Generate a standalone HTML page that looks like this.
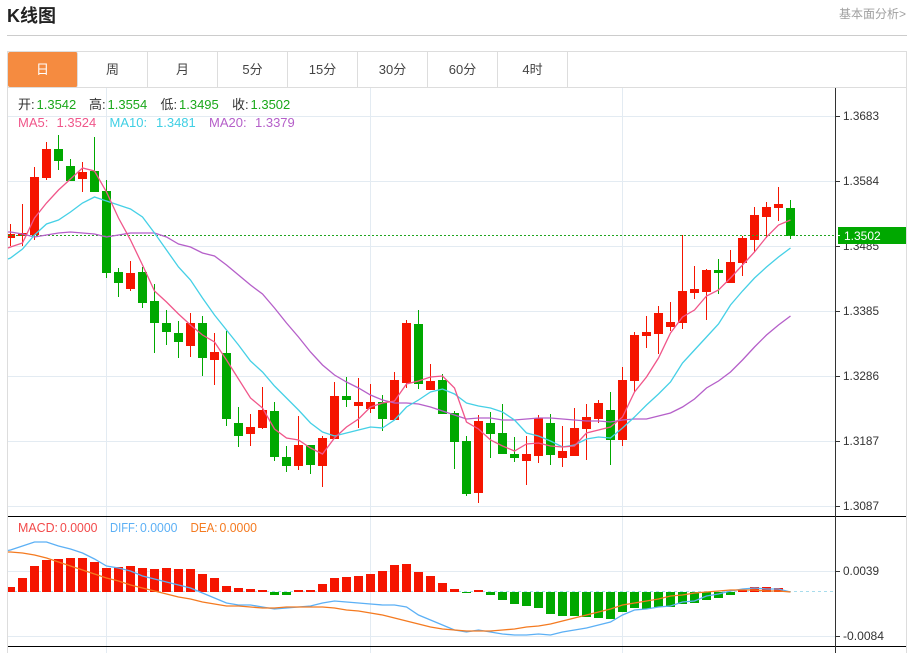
<!DOCTYPE html>
<html lang="zh">
<head>
<meta charset="utf-8">
<title>K线图</title>
<style>
html,body{margin:0;padding:0;background:#fff;width:917px;height:653px;overflow:hidden}
body{position:relative;font-family:"Liberation Sans","Noto Sans CJK SC",sans-serif}
svg{position:absolute;left:0;top:0}
svg text{font-family:"Liberation Sans","Noto Sans CJK SC",sans-serif}
.title{position:absolute;left:7px;top:3px;font-size:18px;line-height:26px;font-weight:bold;color:#222}
.link{position:absolute;right:11px;top:6px;font-size:12px;line-height:16px;color:#a0a0a0}
.tabs{position:absolute;left:8px;top:52px;height:35px;display:flex}
.tab{box-sizing:border-box;width:70px;height:35px;line-height:35px;text-align:center;font-size:13px;color:#444;border-right:1px solid #ddd}
.tab.on{background:#f58b40;color:#fff;border-radius:2px}
</style>
</head>
<body>
<svg width="917" height="653" viewBox="0 0 917 653" xmlns="http://www.w3.org/2000/svg">
<path d="M7 35.5H907" stroke="#ccc" fill="none"/>
<path d="M7.5 653V51.5H906.5V653M8 87.5H906" stroke="#ddd" fill="none"/>
<path d="M8 116.5H835M8 181.5H835M8 246.5H835M8 311.5H835M8 376.5H835M8 441.5H835M8 506.5H835M8 571.5H835M8 636.5H835M106.5 88V653M370.5 88V653M622.5 88V653" stroke="#e3ebf2" fill="none"/>

<path fill="#f51500" d="M8 234h7v4h-7zM18 233h9v3h-9zM30 177h9v58h-9zM42 149h9v29h-9zM78 172h9v7h-9zM126 273h9v16h-9zM186 323h9v23h-9zM210 352h9v8h-9zM246 427h9v7h-9zM258 410h9v18h-9zM294 445h9v21h-9zM318 438h9v28h-9zM330 396h9v43h-9zM354 402h9v4h-9zM366 402h9v7h-9zM390 380h9v40h-9zM402 323h9v60h-9zM426 381h9v9h-9zM474 421h9v72h-9zM522 454h9v7h-9zM534 418h9v38h-9zM558 451h9v7h-9zM570 428h9v28h-9zM582 417h9v12h-9zM594 403h9v16h-9zM618 380h9v60h-9zM630 335h9v46h-9zM642 332h9v4h-9zM654 313h9v21h-9zM666 322h9v5h-9zM678 291h9v32h-9zM690 289h9v4h-9zM702 270h9v22h-9zM726 262h9v21h-9zM738 238h9v25h-9zM750 215h9v25h-9zM762 207h9v10h-9zM774 204h9v4h-9z"/>
<path fill="none" stroke="#f51500" d="M10.5 224V246M22.5 204V246M34.5 167V240M46.5 142V180M82.5 162V192M130.5 261V291M190.5 313V357M214.5 333V385M250.5 414V446M262.5 387V429M298.5 416V470M322.5 436V487M334.5 382V439M358.5 378V428M370.5 384V413M394.5 372V420M406.5 320V388M430.5 364V390M478.5 415V503M526.5 436V485M538.5 415V463M562.5 426V467M574.5 408V456M586.5 404V460M598.5 400V423M622.5 367V446M634.5 332V392M646.5 316V348M658.5 306V354M670.5 302V331M682.5 235V329M694.5 266V299M706.5 269V320M730.5 250V283M742.5 236V276M754.5 207V252M766.5 202V238M778.5 187V221"/>
<path fill="#00a800" d="M54 149h9v12h-9zM66 166h9v15h-9zM90 171h9v21h-9zM102 191h9v82h-9zM114 272h9v11h-9zM138 272h9v31h-9zM150 301h9v22h-9zM162 323h9v9h-9zM174 333h9v9h-9zM198 323h9v35h-9zM222 353h9v66h-9zM234 423h9v13h-9zM270 411h9v46h-9zM282 457h9v9h-9zM306 445h9v20h-9zM342 396h9v4h-9zM378 402h9v17h-9zM414 324h9v60h-9zM438 380h9v34h-9zM450 413h9v29h-9zM462 441h9v53h-9zM486 423h9v11h-9zM498 433h9v21h-9zM510 454h9v4h-9zM546 423h9v32h-9zM606 410h9v30h-9zM714 270h9v3h-9zM786 208h9v28h-9z"/>
<path fill="none" stroke="#00a800" d="M58.5 135V170M70.5 159V181M94.5 137V192M106.5 180V278M118.5 268V297M142.5 267V308M154.5 284V353M166.5 310V345M178.5 321V358M202.5 316V376M226.5 331V426M238.5 407V447M274.5 402V461M286.5 446V472M310.5 445V474M346.5 377V407M382.5 395V431M418.5 310V389M442.5 374V414M454.5 411V469M466.5 436V496M490.5 412V458M502.5 404V454M514.5 437V462M550.5 414V465M610.5 392V465M718.5 259V294M790.5 200V239"/>

<path d="M8 235.5H835" stroke="#1fa51f" stroke-dasharray="2 2" fill="none"/>

<polyline fill="none" stroke="#b55fc9" stroke-width="1.3" points="8,232 10.5,232 22.5,234 34.5,237 46.5,235 58.5,233 70.5,232 82.5,233 94.5,234 106.5,237 118.5,235 130.5,233 142.5,233 154.5,233 166.5,237 178.5,244 190.5,247 202.5,253 214.5,256 226.5,265 238.5,275 250.5,285 262.5,294 274.5,308 286.5,323 298.5,337 310.5,352 322.5,365 334.5,375 346.5,382 358.5,388 370.5,395 382.5,400 394.5,403 406.5,403 418.5,404 430.5,407 442.5,411 454.5,415 466.5,419 478.5,418 490.5,418 502.5,420 514.5,420 526.5,419 538.5,418 550.5,418 562.5,419 574.5,420 586.5,421 598.5,421 610.5,422 622.5,420 634.5,419 646.5,419 658.5,416 670.5,413 682.5,407 694.5,399 706.5,388 718.5,381 730.5,372 742.5,360 754.5,347 766.5,335 778.5,325 790.5,316"/>
<polyline fill="none" stroke="#45d0e6" stroke-width="1.3" points="8,259 10.5,258 22.5,249 34.5,235 46.5,224 58.5,220 70.5,212 82.5,203 94.5,197 106.5,201 118.5,205 130.5,209 142.5,217 154.5,233 166.5,250 178.5,267 190.5,280 202.5,298 214.5,315 226.5,330 238.5,345 250.5,361 262.5,372 274.5,386 286.5,398 298.5,410 310.5,423 322.5,432 334.5,436 346.5,433 358.5,430 370.5,427 382.5,428 394.5,420 406.5,407 418.5,400 430.5,392 442.5,389 454.5,394 466.5,403 478.5,406 490.5,408 502.5,412 514.5,420 526.5,433 538.5,436 550.5,441 562.5,447 574.5,445 586.5,439 598.5,437 610.5,438 622.5,428 634.5,417 646.5,405 658.5,394 670.5,382 682.5,363 694.5,350 706.5,337 718.5,324 730.5,305 742.5,291 754.5,278 766.5,267 778.5,257 790.5,248"/>
<polyline fill="none" stroke="#f0568a" stroke-width="1.3" points="8,248 10.5,247 22.5,243 34.5,218 46.5,203 58.5,190 70.5,179 82.5,168 94.5,171 106.5,192 118.5,218 130.5,240 142.5,265 154.5,291 166.5,302 178.5,314 190.5,325 202.5,335 214.5,342 226.5,360 238.5,379 250.5,398 262.5,408 274.5,429 286.5,438 298.5,440 310.5,448 322.5,454 334.5,438 346.5,427 358.5,419 370.5,407 382.5,403 394.5,401 406.5,384 418.5,381 430.5,377 442.5,376 454.5,388 466.5,422 478.5,429 490.5,440 502.5,446 514.5,451 526.5,444 538.5,443 550.5,446 562.5,447 574.5,446 586.5,433 598.5,430 610.5,427 622.5,417 634.5,392 646.5,377 658.5,358 670.5,333 682.5,317 694.5,310 706.5,296 718.5,290 730.5,278 742.5,265 754.5,252 766.5,237 778.5,225 790.5,220"/>

<path d="M8 591.5H835" stroke="#a8dcec" stroke-dasharray="3 3" fill="none"/>
<path fill="#f51500" d="M8 587h7v5h-7zM18 578h9v14h-9zM30 566h9v26h-9zM42 560h9v32h-9zM54 559h9v33h-9zM66 558h9v34h-9zM78 558h9v34h-9zM90 562h9v30h-9zM102 568h9v24h-9zM114 567h9v25h-9zM126 566h9v26h-9zM138 568h9v24h-9zM150 569h9v23h-9zM162 568h9v24h-9zM174 569h9v23h-9zM186 569h9v23h-9zM198 574h9v18h-9zM210 578h9v14h-9zM222 586h9v6h-9zM234 588h9v4h-9zM246 589h9v3h-9zM258 590h9v2h-9zM294 590h9v2h-9zM306 590h9v2h-9zM318 584h9v8h-9zM330 578h9v14h-9zM342 577h9v15h-9zM354 576h9v16h-9zM366 574h9v18h-9zM378 571h9v21h-9zM390 565h9v27h-9zM402 564h9v28h-9zM414 572h9v20h-9zM426 576h9v16h-9zM438 583h9v9h-9zM450 589h9v3h-9zM474 590h9v2h-9zM738 590h9v2h-9zM750 587h9v5h-9zM762 587h9v5h-9zM774 588h9v4h-9z"/>
<path fill="#00a800" d="M270 592h9v3h-9zM282 592h9v3h-9zM462 592h9v1h-9zM486 592h9v3h-9zM498 592h9v8h-9zM510 592h9v12h-9zM522 592h9v14h-9zM534 592h9v16h-9zM546 592h9v22h-9zM558 592h9v24h-9zM570 592h9v24h-9zM582 592h9v25h-9zM594 592h9v26h-9zM606 592h9v27h-9zM618 592h9v20h-9zM630 592h9v16h-9zM642 592h9v17h-9zM654 592h9v15h-9zM666 592h9v15h-9zM678 592h9v12h-9zM690 592h9v11h-9zM702 592h9v8h-9zM714 592h9v6h-9zM726 592h9v3h-9z"/>
<polyline fill="none" stroke="#5cb0f5" stroke-width="1.3" points="8,550.5 10.5,550 22.5,546 34.5,542 46.5,542 58.5,546 70.5,549 82.5,553 94.5,559 106.5,566 118.5,568 130.5,571 142.5,576 154.5,579 166.5,582 178.5,585 190.5,588 202.5,593 214.5,598 226.5,603 238.5,605 250.5,605 262.5,607 274.5,609 286.5,608 298.5,607 310.5,606 322.5,603 334.5,601 346.5,602 358.5,603 370.5,604 382.5,605 394.5,605 406.5,607 418.5,615 430.5,620 442.5,625 454.5,630 466.5,632 478.5,630 490.5,632 502.5,634 514.5,635 526.5,635 538.5,634 550.5,635 562.5,632 574.5,630 586.5,628 598.5,625 610.5,622 622.5,615 634.5,610 646.5,609 658.5,607 670.5,606 682.5,602 694.5,601 706.5,596 718.5,594 730.5,591 742.5,589 754.5,588 766.5,589 778.5,589 790.5,592"/>
<polyline fill="none" stroke="#f47a20" stroke-width="1.3" points="8,552 10.5,552 22.5,553 34.5,555 46.5,558 58.5,562 70.5,566 82.5,570 94.5,574 106.5,578 118.5,581 130.5,585 142.5,588 154.5,591 166.5,594 178.5,597 190.5,599 202.5,602 214.5,604 226.5,606 238.5,606 250.5,607 262.5,608 274.5,608 286.5,607 298.5,607 310.5,607 322.5,607 334.5,608 346.5,610 358.5,611 370.5,613 382.5,615 394.5,618 406.5,621 418.5,624 430.5,627 442.5,629 454.5,630 466.5,631 478.5,631 490.5,631 502.5,630 514.5,629 526.5,627 538.5,626 550.5,624 562.5,621 574.5,618 586.5,615 598.5,612 610.5,609 622.5,605 634.5,603 646.5,601 658.5,599 670.5,596 682.5,595 694.5,593 706.5,592 718.5,591 730.5,590 742.5,590 754.5,590 766.5,591 778.5,591 790.5,592"/>

<path d="M8 516.5H906M8 646.5H906" stroke="#000" fill="none"/>
<path d="M835.5 88V653M836 116.5H840M836 181.5H840M836 246.5H840M836 311.5H840M836 376.5H840M836 441.5H840M836 506.5H840M836 571.5H840M836 636.5H840" stroke="#333" fill="none"/>

<g font-size="12" fill="#333">
<text x="843" y="120" textLength="36" lengthAdjust="spacingAndGlyphs">1.3683</text>
<text x="843" y="185" textLength="36" lengthAdjust="spacingAndGlyphs">1.3584</text>
<text x="843" y="250" textLength="36" lengthAdjust="spacingAndGlyphs">1.3485</text>
<text x="843" y="315" textLength="36" lengthAdjust="spacingAndGlyphs">1.3385</text>
<text x="843" y="380" textLength="36" lengthAdjust="spacingAndGlyphs">1.3286</text>
<text x="843" y="445" textLength="36" lengthAdjust="spacingAndGlyphs">1.3187</text>
<text x="843" y="510" textLength="36" lengthAdjust="spacingAndGlyphs">1.3087</text>
<text x="843" y="575" textLength="36" lengthAdjust="spacingAndGlyphs">0.0039</text>
<text x="843" y="640" textLength="41" lengthAdjust="spacingAndGlyphs">-0.0084</text>
</g>
<rect x="838" y="227" width="68" height="17" fill="#00a800"/>
<path d="M836 235.5H840" stroke="#fff"/>
<text x="844" y="240" font-size="12" fill="#fff">1.3502</text>

<g font-size="13">
<text x="18" y="109" fill="#333">开:</text><text x="36.5" y="109" fill="#1aa81a">1.3542</text>
<text x="89" y="109" fill="#333">高:</text><text x="107.5" y="109" fill="#1aa81a">1.3554</text>
<text x="160.5" y="109" fill="#333">低:</text><text x="179" y="109" fill="#1aa81a">1.3495</text>
<text x="232" y="109" fill="#333">收:</text><text x="250.5" y="109" fill="#1aa81a">1.3502</text>
<text x="18" y="127" fill="#f0568a">MA5:</text><text x="56.5" y="127" fill="#f0568a">1.3524</text>
<text x="109.5" y="127" fill="#3fcfe4">MA10:</text><text x="156" y="127" fill="#3fcfe4">1.3481</text>
<text x="209" y="127" fill="#b55fc9">MA20:</text><text x="255" y="127" fill="#b55fc9">1.3379</text>
</g>
<g font-size="13">
<text x="18" y="532" fill="#f24a4a" textLength="40" lengthAdjust="spacingAndGlyphs">MACD:</text><text x="60" y="532" fill="#f24a4a" textLength="37.5" lengthAdjust="spacingAndGlyphs">0.0000</text>
<text x="110" y="532" fill="#5cb0f5" textLength="28" lengthAdjust="spacingAndGlyphs">DIFF:</text><text x="140" y="532" fill="#5cb0f5" textLength="37.5" lengthAdjust="spacingAndGlyphs">0.0000</text>
<text x="190.5" y="532" fill="#f47a20" textLength="27" lengthAdjust="spacingAndGlyphs">DEA:</text><text x="219.5" y="532" fill="#f47a20" textLength="37.5" lengthAdjust="spacingAndGlyphs">0.0000</text>
</g>
</svg>

<div class="title">K线图</div>
<div class="link">基本面分析&gt;</div>
<div class="tabs">
<div class="tab on">日</div>
<div class="tab">周</div>
<div class="tab">月</div>
<div class="tab">5分</div>
<div class="tab">15分</div>
<div class="tab">30分</div>
<div class="tab">60分</div>
<div class="tab">4时</div>
</div>
</body>
</html>
